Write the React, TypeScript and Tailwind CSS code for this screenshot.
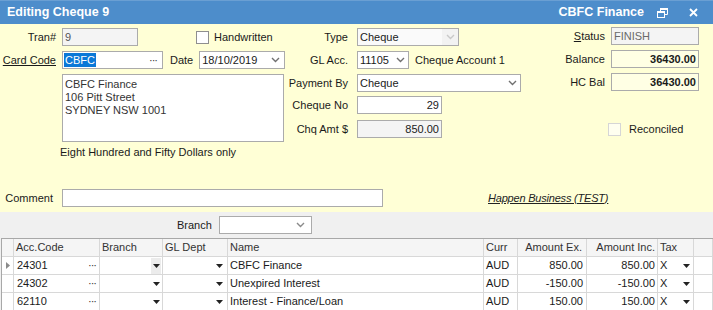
import React from 'react';

const border = 'border border-[#ababab]';

function Chevron({ color = '#707070' }: { color?: string }) {
  return (
    <svg width="9" height="6" viewBox="0 0 9 6">
      <path d="M1 1l3.5 3.5L8 1" fill="none" stroke={color} strokeWidth="1.4" />
    </svg>
  );
}

function DropArrow() {
  return (
    <svg width="7" height="4" viewBox="0 0 7 4">
      <path d="M0 0h7L3.5 4z" fill="#222" />
    </svg>
  );
}

function Label({ w, children, className = '' }: { w: string; children: React.ReactNode; className?: string }) {
  return <div className={`${w} flex justify-end whitespace-nowrap shrink-0 ${className}`}>{children}</div>;
}

function Box({
  w,
  bg = 'bg-white',
  className = '',
  children,
}: {
  w: string;
  bg?: string;
  className?: string;
  children?: React.ReactNode;
}) {
  return (
    <div className={`${w} h-[18px] ${border} ${bg} flex items-center shrink-0 ${className}`}>{children}</div>
  );
}

function Select({ w, value, disabled = false }: { w: string; value: string; disabled?: boolean }) {
  return (
    <Box w={w} bg={disabled ? 'bg-[#fafafa]' : 'bg-white'} className="pl-[2px]">
      <span className="flex-1">{value}</span>
      <span className={`w-[16px] h-full flex items-center justify-center ${disabled ? 'bg-[#f2f2f2]' : ''}`}>
        <Chevron color={disabled ? '#c8c8c8' : '#707070'} />
      </span>
    </Box>
  );
}

function Check({ disabled = false }: { disabled?: boolean }) {
  return (
    <div
      className={`w-[13px] h-[13px] shrink-0 border ${
        disabled ? 'border-[#d6d6d6] bg-[#fffff0]' : 'border-[#8f8f8f] bg-white'
      }`}
    />
  );
}

const rows = [
  { code: '24301', name: 'CBFC Finance', ex: '850.00', inc: '850.00', current: true },
  { code: '24302', name: 'Unexpired Interest', ex: '-150.00', inc: '-150.00', current: false },
  { code: '62110', name: 'Interest - Finance/Loan', ex: '150.00', inc: '150.00', current: false },
];

const cell = 'border-r border-b border-[#d8d8d8] h-[18px] flex items-center';

export default function App() {
  return (
    <div className="w-[713px] h-[310px] overflow-hidden bg-[#f0f0f0] font-['Liberation_Sans',Arial,sans-serif] text-[11px] text-[#1a1a1a] flex flex-col">
      {/* title bar */}
      <div className="h-[24px] shrink-0 bg-[#4d8dcb] border-t border-[#6a9fd3] flex items-center text-white font-bold text-[12.5px] pl-[7px]">
        <span>Editing Cheque 9</span>
        <span className="ml-auto">CBFC Finance</span>
        <svg className="ml-[13px]" width="11" height="10" viewBox="0 0 11 10">
          <path d="M3.5 3V0.5h7v6H8" fill="none" stroke="white" strokeWidth="1" />
          <rect x="3" y="0" width="8" height="2" fill="white" />
          <rect x="0.5" y="3.5" width="7" height="6" fill="none" stroke="white" strokeWidth="1" />
          <rect x="0" y="3" width="8" height="2" fill="white" />
        </svg>
        <svg className="ml-[21px] mr-[15px]" width="9" height="9" viewBox="0 0 9 9">
          <path d="M1 1l7 7M8 1L1 8" stroke="white" strokeWidth="1.8" />
        </svg>
      </div>

      {/* form */}
      <div className="h-[188px] shrink-0 bg-[#ffffd6] pt-[4px] flex flex-col">
        {/* row 1 */}
        <div className="flex items-center h-[18px]">
          <div className="w-[290px] flex items-center shrink-0">
            <Label w="w-[56px]">Tran#</Label>
            <Box w="w-[76px] ml-[6px]" bg="bg-[#f4f4f4]" className="pl-[2px] text-[#555]">
              9
            </Box>
            <div className="ml-[58px]">
              <Check />
            </div>
            <span className="ml-[5px]">Handwritten</span>
          </div>
          <div className="w-[250px] flex items-center shrink-0">
            <Label w="w-[58px]">Type</Label>
            <div className="ml-[9px]">
              <Select w="w-[102px]" value="Cheque" disabled />
            </div>
          </div>
          <div className="flex items-center -mt-[2px]">
            <Label w="w-[65px]">
              <span className="underline">S</span>tatus
            </Label>
            <Box w="w-[88px] ml-[6px]" bg="bg-[#f4f4f4]" className="pl-[2px] text-[#6a6a6a]">
              FINISH
            </Box>
          </div>
        </div>

        {/* row 2 */}
        <div className="flex items-center h-[18px] mt-[5px]">
          <div className="w-[290px] flex items-center shrink-0">
            <Label w="w-[56px]">
              <span className="underline">Card Code</span>
            </Label>
            <Box w="w-[101px] ml-[6px]" className="pl-[1px] pr-[5px]">
              <span className="bg-[#0a78d7] text-white px-[1px] leading-[14px]">CBFC</span>
              <span className="ml-auto tracking-[-1px] text-[#333]">···</span>
            </Box>
            <span className="ml-[7px]">Date</span>
            <Box w="w-[86px] ml-[6px]" className="pl-[2px] pr-[4px]">
              <span className="flex-1">18/10/2019</span>
              <Chevron />
            </Box>
          </div>
          <div className="w-[250px] flex items-center shrink-0">
            <Label w="w-[58px]">GL Acc.</Label>
            <div className="ml-[9px]">
              <Select w="w-[52px]" value="11105" />
            </div>
            <span className="ml-[6px]">Cheque Account 1</span>
          </div>
          <div className="flex items-center -mt-[2px]">
            <Label w="w-[65px]">Balance</Label>
            <Box w="w-[88px] ml-[6px]" bg="bg-[#ffffe4]" className="justify-end pr-[2px] font-bold">
              36430.00
            </Box>
          </div>
        </div>

        {/* lower block */}
        <div className="flex mt-[5px]">
          <div className="w-[290px] shrink-0 flex flex-col">
            <div className={`ml-[62px] w-[222px] h-[68px] ${border} bg-white pl-[2px] pt-[3px] leading-[13px] text-[#333]`}>
              <div>CBFC Finance</div>
              <div>106 Pitt Street</div>
              <div>SYDNEY NSW 1001</div>
            </div>
            <div className="ml-[60px] mt-[4px] leading-[13px]">Eight Hundred and Fifty Dollars only</div>
          </div>
          <div className="w-[250px] shrink-0 flex flex-col">
            <div className="flex items-center h-[18px]">
              <Label w="w-[58px]">Payment By</Label>
              <div className="ml-[9px]">
                <Select w="w-[164px]" value="Cheque" />
              </div>
            </div>
            <div className="flex items-center h-[18px] mt-[4px]">
              <Label w="w-[58px]">Cheque No</Label>
              <Box w="w-[85px] ml-[9px]" className="justify-end pr-[2px]">
                29
              </Box>
            </div>
            <div className="flex items-center h-[18px] mt-[6px]">
              <Label w="w-[58px]">Chq Amt $</Label>
              <Box w="w-[85px] ml-[9px]" bg="bg-[#f4f4f4]" className="justify-end pr-[2px]">
                850.00
              </Box>
            </div>
          </div>
          <div className="flex flex-col -mt-[1px]">
            <div className="flex items-center h-[18px]">
              <Label w="w-[65px]">HC Bal</Label>
              <Box w="w-[88px] ml-[6px]" bg="bg-[#ffffe4]" className="justify-end pr-[2px] font-bold">
                36430.00
              </Box>
            </div>
            <div className="flex items-center ml-[68px] mt-[30px]">
              <Check disabled />
              <span className="ml-[8px]">Reconciled</span>
            </div>
          </div>
        </div>

        {/* comment row */}
        <div className="flex items-center h-[18px] mt-[30px]">
          <Label w="w-[56px]" className="pr-[3px]">
            Comment
          </Label>
          <Box w="w-[321px] ml-[6px]" />
          <span className="ml-[105px] italic underline text-[#222] tracking-[-0.2px]">Happen Business (TEST)</span>
        </div>
      </div>

      {/* branch filter */}
      <div className="h-[26px] shrink-0 flex items-center pl-[177px]">
        <span>Branch</span>
        <Box w="w-[93px] ml-[7px]" className="justify-end pr-[6px]">
          <Chevron color="#8a8a8a" />
        </Box>
      </div>

      {/* grid */}
      <div className="ml-[1px] border-l border-t border-[#a8a8a8] grid grid-cols-[12px_86px_63px_65px_256px_34px_69px_71px_36px_1fr] text-[#1a1a1a]">
        <div className={`${cell} bg-[#f5f5f5]`} />
        <div className={`${cell} bg-[#f5f5f5] pl-[2px] text-[#333]`}>Acc.Code</div>
        <div className={`${cell} bg-[#f5f5f5] pl-[2px] text-[#333]`}>Branch</div>
        <div className={`${cell} bg-[#f5f5f5] pl-[2px] text-[#333]`}>GL Dept</div>
        <div className={`${cell} bg-[#f5f5f5] pl-[2px] text-[#333]`}>Name</div>
        <div className={`${cell} bg-[#f5f5f5] pl-[2px] text-[#333]`}>Curr</div>
        <div className={`${cell} bg-[#f5f5f5] justify-end pr-[4px] text-[#333]`}>Amount Ex.</div>
        <div className={`${cell} bg-[#f5f5f5] justify-end pr-[2px] text-[#333]`}>Amount Inc.</div>
        <div className={`${cell} bg-[#f5f5f5] pl-[2px] text-[#333]`}>Tax</div>
        <div className={`${cell} bg-[#f5f5f5]`} />
        {rows.map((r) => (
          <React.Fragment key={r.code}>
            <div className={`${cell} bg-white justify-center`}>
              {r.current && (
                <svg width="4" height="7" viewBox="0 0 4 7">
                  <path d="M0 0l4 3.5L0 7z" fill="#8a8a8a" />
                </svg>
              )}
            </div>
            <div className={`${cell} bg-white pl-[3px] pr-[3px]`}>
              <span className="flex-1">{r.code}</span>
              <span className="tracking-[-1px] text-[#333]">···</span>
            </div>
            <div className={`${cell} bg-white justify-end`}>
              <span
                className={`w-[10px] h-[16px] mr-[1px] flex items-center justify-center ${
                  r.current ? 'bg-[#ececec]' : ''
                }`}
              >
                <DropArrow />
              </span>
            </div>
            <div className={`${cell} bg-white justify-end pr-[4px]`}>
              <DropArrow />
            </div>
            <div className={`${cell} bg-white pl-[2px]`}>{r.name}</div>
            <div className={`${cell} bg-white pl-[2px]`}>AUD</div>
            <div className={`${cell} bg-white justify-end pr-[3px]`}>{r.ex}</div>
            <div className={`${cell} bg-white justify-end pr-[2px]`}>{r.inc}</div>
            <div className={`${cell} bg-white pl-[2px] pr-[3px]`}>
              <span className="flex-1">X</span>
              <DropArrow />
            </div>
            <div className={`${cell} bg-white`} />
          </React.Fragment>
        ))}
      </div>
    </div>
  );
}
